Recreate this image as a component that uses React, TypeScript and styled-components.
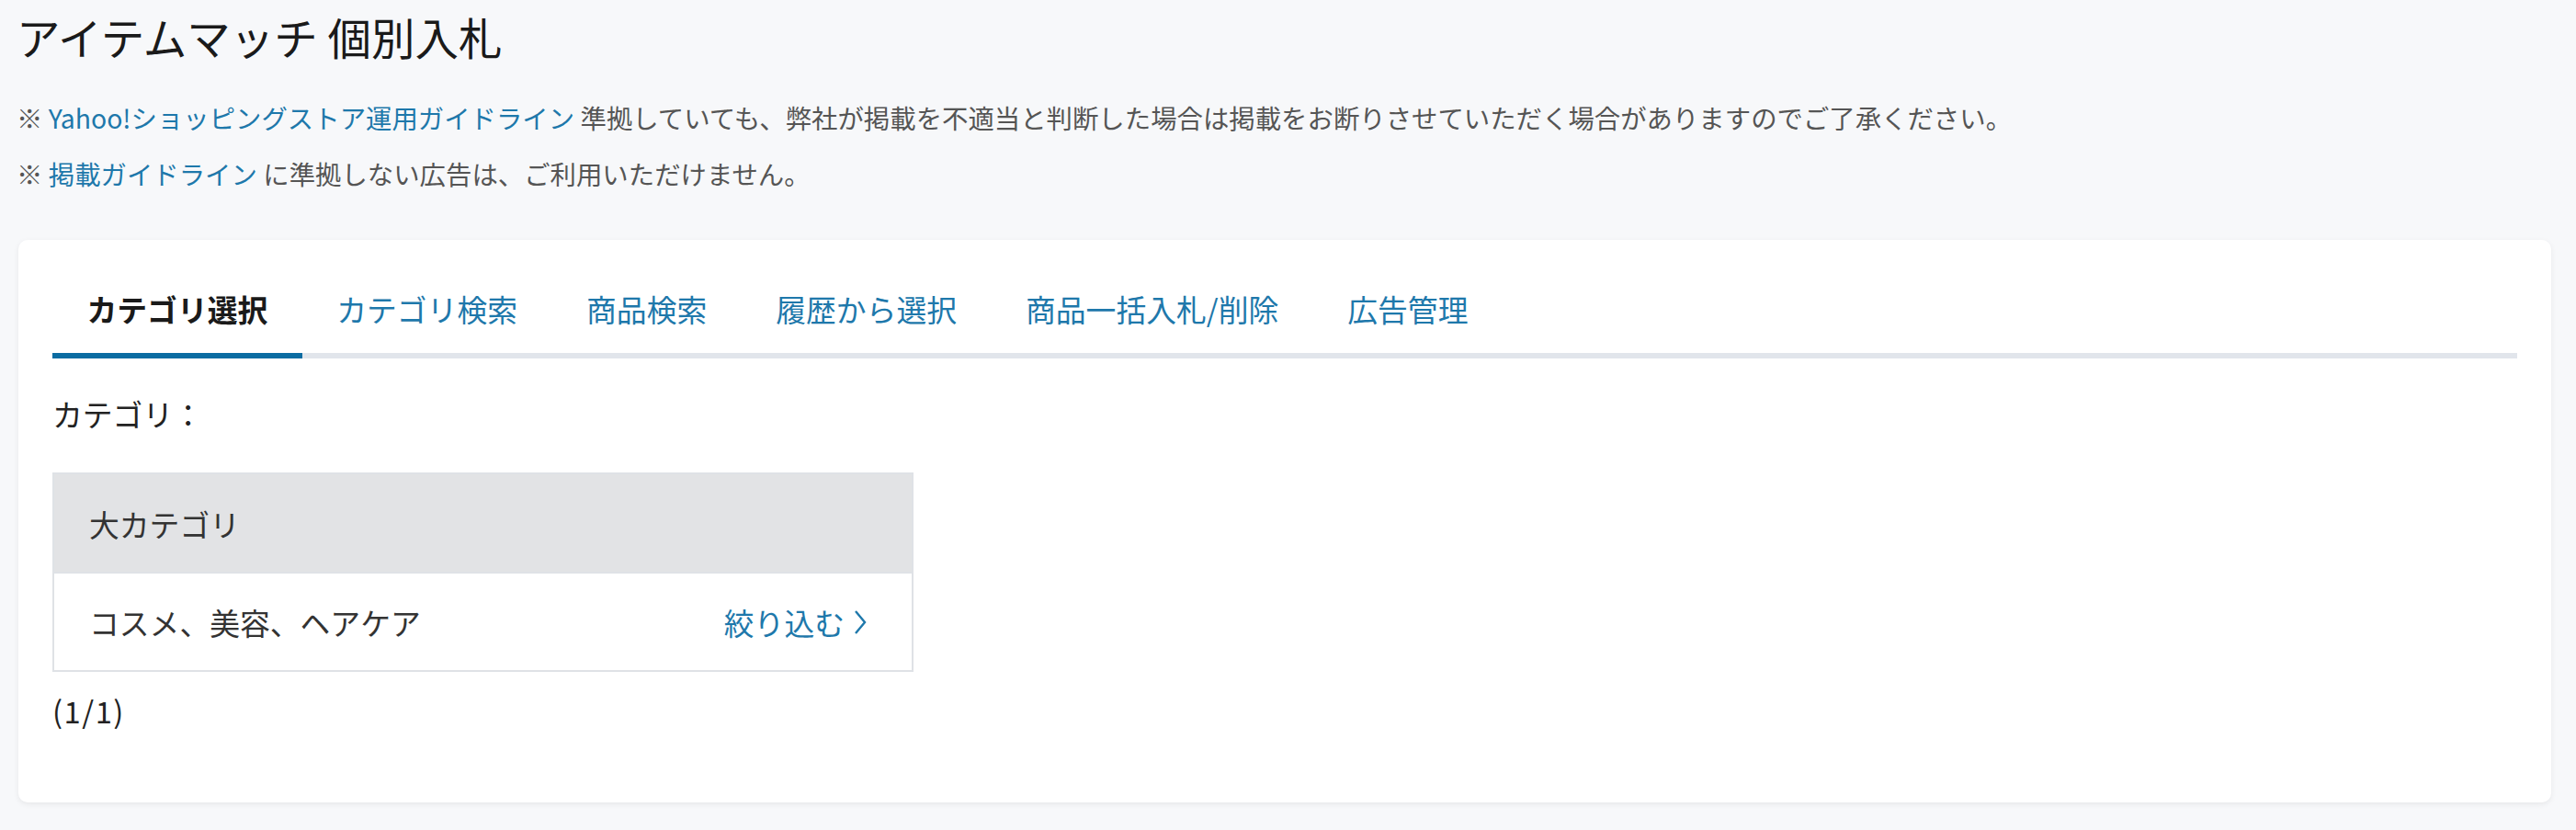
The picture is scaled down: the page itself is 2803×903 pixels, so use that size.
import React, { useState } from 'react';
import styled, { createGlobalStyle } from 'styled-components';

const colors = {
  pageBg: '#f7f8fa',
  text: '#222222',
  subText: '#555555',
  link: '#1e78ab',
  active: '#0b6ca2',
  rail: '#e1e5eb',
  headBg: '#e2e3e5',
  border: '#dfe2e6'
};

const tabs = [
  'カテゴリ選択',
  'カテゴリ検索',
  '商品検索',
  '履歴から選択',
  '商品一括入札/削除',
  '広告管理'
];

const GlobalStyle = createGlobalStyle`
  body {
    margin: 0;
    background: ${colors.pageBg};
    font-family: 'Noto Sans CJK JP', 'Noto Sans', sans-serif;
    color: ${colors.text};
  }
`;

const Page = styled.div`
  padding: 8px 27px 29px 20px;
`;

const Title = styled.h1`
  margin: 0 0 0 -2px;
  font-size: 47.5px;
  font-weight: 400;
  line-height: 64px;
  color: #1a1a1a;
`;

const Notes = styled.div`
  display: flex;
  flex-direction: column;
  gap: 19px;
  margin-top: 35px;
  margin-bottom: 51px;
`;

const Note = styled.p`
  margin: 0 0 0 -2px;
  font-size: 28.4px;
  line-height: 42px;
  color: ${colors.subText};
`;

const Link = styled.a`
  color: ${colors.link};
  text-decoration: none;
`;

const Card = styled.div`
  background: #fff;
  border-radius: 10px;
  box-shadow: 0 2px 6px rgba(0, 0, 0, 0.07);
  padding: 51px 37px 76px 37px;
`;

const TabList = styled.div`
  display: flex;
  border-bottom: 6px solid ${colors.rail};
`;

const Tab = styled.button<{ active?: boolean }>`
  border: none;
  background: none;
  font-family: inherit;
  font-size: 32.8px;
  line-height: 48px;
  padding: 0 37.5px 24px;
  margin-bottom: -6px;
  cursor: pointer;
  font-weight: ${(p) => (p.active ? 700 : 400)};
  color: ${(p) => (p.active ? '#1a1a1a' : colors.link)};
  border-bottom: 6px solid ${(p) => (p.active ? colors.active : 'transparent')};
`;

const Label = styled.div`
  margin-top: 36px;
  font-size: 32.8px;
  line-height: 48px;
  color: ${colors.text};
`;

const Table = styled.div`
  width: 937px;
  margin-top: 40px;
  border: 2px solid ${colors.border};
  box-sizing: border-box;
`;

const Row = styled.div<{ head?: boolean }>`
  display: flex;
  align-items: center;
  justify-content: space-between;
  height: ${(p) => (p.head ? 106 : 105)}px;
  padding: 0 49px 0 38px;
  background: ${(p) => (p.head ? colors.headBg : '#fff')};
  font-size: 32.8px;
  color: #333;
  & + & {
    border-top: 2px solid ${colors.border};
  }
`;

const Narrow = styled.a`
  display: flex;
  align-items: center;
  gap: 10px;
  color: ${colors.link};
  text-decoration: none;
  cursor: pointer;
`;

const Pager = styled.div`
  margin-top: 18px;
  font-size: 32.8px;
  line-height: 48px;
  letter-spacing: 1.5px;
  color: ${colors.text};
`;

const Chevron = () => (
  <svg width="14" height="28" viewBox="0 0 14 28">
    <polyline points="2,2 12,14 2,26" fill="none" stroke={colors.link} strokeWidth="2.4" />
  </svg>
);

export default function App() {
  const [active, setActive] = useState(0);

  return (
    <Page>
      <GlobalStyle />
      <Title>アイテムマッチ 個別入札</Title>
      <Notes>
        <Note>
          ※ <Link>Yahoo!ショッピングストア運用ガイドライン</Link>{' '}
          準拠していても、弊社が掲載を不適当と判断した場合は掲載をお断りさせていただく場合がありますのでご了承ください。
        </Note>
        <Note>
          ※ <Link>掲載ガイドライン</Link> に準拠しない広告は、ご利用いただけません。
        </Note>
      </Notes>
      <Card>
        <TabList>
          {tabs.map((t, i) => (
            <Tab key={t} active={active === i} onClick={() => setActive(i)}>
              {t}
            </Tab>
          ))}
        </TabList>
        <Label>カテゴリ：</Label>
        <Table>
          <Row head>大カテゴリ</Row>
          <Row>
            <span>コスメ、美容、ヘアケア</span>
            <Narrow>
              絞り込む
              <Chevron />
            </Narrow>
          </Row>
        </Table>
        <Pager>(1/1)</Pager>
      </Card>
    </Page>
  );
}
